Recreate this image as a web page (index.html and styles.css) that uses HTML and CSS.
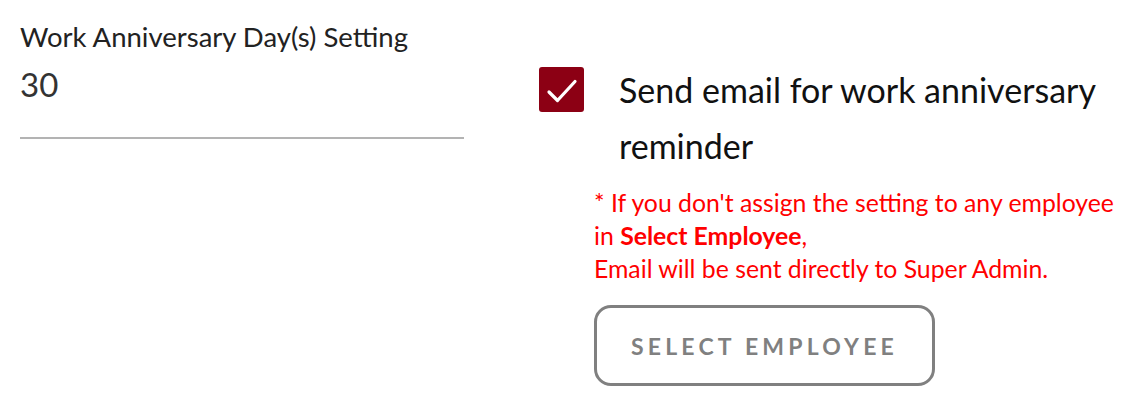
FILE: index.html
```html
<!DOCTYPE html>
<html lang="en">
<head>
    <meta charset="UTF-8">
    <title>Work Anniversary Setting</title>
    <link rel="stylesheet" href="styles.css">
</head>
<body>

    <div class="settings-row">
        <div class="field">
            <label for="days" class="field-label">Work Anniversary Day(s) Setting</label>
            <input type="text" id="days" class="field-input" value="30">
        </div>

        <div class="notify">
            <label class="check-row">
                <span class="check-box">
                    <svg viewBox="0 0 45 45" width="45" height="45">
                        <path d="M10 25l8.5 8.5L36 14.5" fill="none" stroke="#fff" stroke-width="3.2" stroke-linecap="round" stroke-linejoin="round"/>
                    </svg>
                </span>
                <span class="check-text">Send email for work anniversary reminder</span>
            </label>

            <p class="note">
                * If you don't assign the setting to any employee in <strong class="note-em">Select Employee</strong>,<br>
                Email will be sent directly to Super Admin.
            </p>

            <button class="outline-btn">Select Employee</button>
        </div>
    </div>

</body>
</html>
```

FILE: styles.css
```css
body {
    margin: 0;
    padding: 18px 20px;
    font-family: Lato, 'Open Sans', sans-serif;
    background: #fff;
}

.settings-row {
    display: flex;
    gap: 75px;
}

.field {
    flex: none;
    width: 444px;
    display: flex;
    flex-direction: column;
}

.field-label {
    font-size: 27.5px;
    color: #222;
    line-height: 38px;
}

.field-input {
    box-sizing: border-box;
    width: 100%;
    height: 77px;
    margin: 6px 0 0;
    padding: 0 0 31px;
    font-family: inherit;
    font-size: 33px;
    line-height: 44px;
    color: #333;
    border: none;
    border-bottom: 2px solid #b3b3b3;
    outline: none;
}

.notify {
    flex: 1;
    padding-top: 49px;
}

.check-row {
    display: flex;
    align-items: flex-start;
    gap: 35px;
}

.check-box {
    flex: none;
    width: 45px;
    height: 45px;
    background: #8c0014;
    border-radius: 3px;
}

.check-box svg {
    display: block;
}

.check-text {
    font-size: 34px;
    color: #111;
    line-height: 56px;
    margin-top: -5px;
}

.note {
    margin: 12px 0 0 55px;
    font-size: 24.8px;
    line-height: 33px;
    color: #f00;
}

.note-em {
    font-weight: bold;
}

.outline-btn {
    box-sizing: border-box;
    margin: 20px 0 0 55px;
    width: 341px;
    height: 81px;
    border: 3px solid #808080;
    border-radius: 17px;
    background: #fff;
    color: #808080;
    font-family: inherit;
    font-size: 23px;
    font-weight: bold;
    letter-spacing: 4.2px;
    text-transform: uppercase;
    cursor: pointer;
}
```
